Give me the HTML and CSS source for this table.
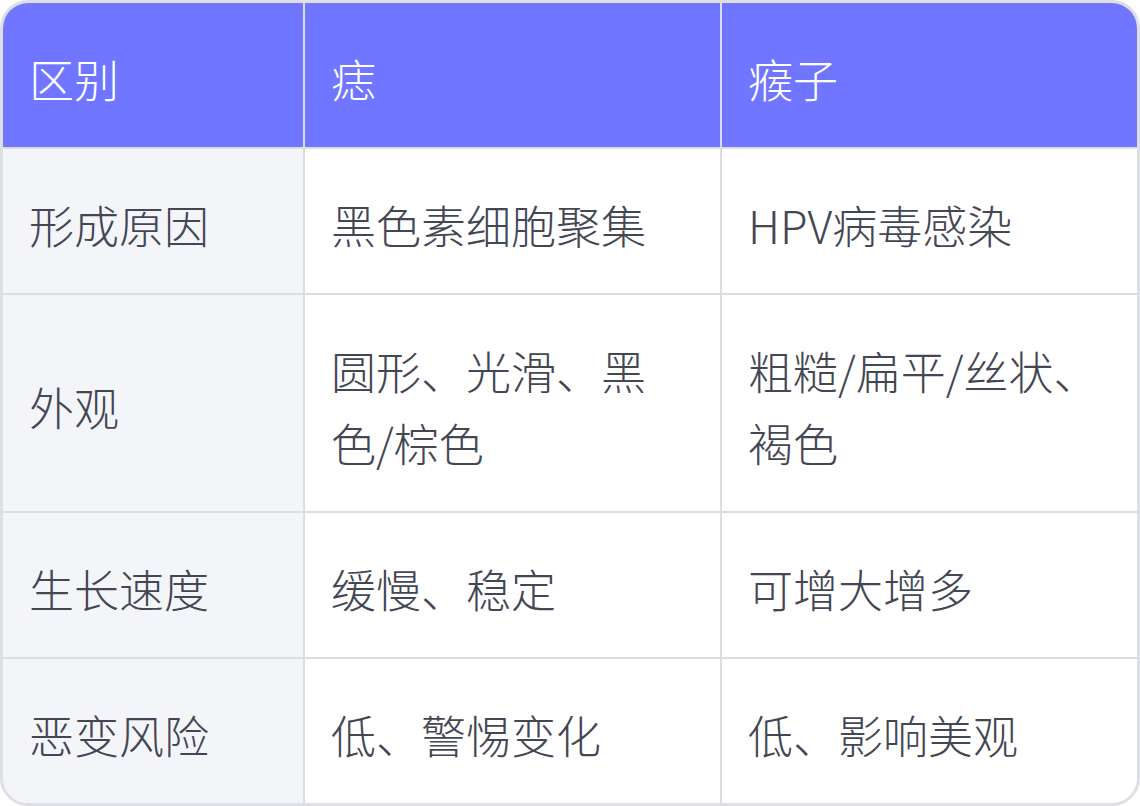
FILE: index.html
```html
<!DOCTYPE html>
<html lang="zh">
<head>
<meta charset="utf-8">
<link rel="stylesheet" href="styles.css">
</head>
<body>
<div class="card">
<table class="cmp">
<colgroup><col class="c1"><col class="c2"><col class="c3"></colgroup>
<thead>
<tr><th>区别</th><th>痣</th><th>瘊子</th></tr>
</thead>
<tbody>
<tr><td class="key">形成原因</td><td>黑色素细胞聚集</td><td>HPV病毒感染</td></tr>
<tr><td class="key">外观</td><td>圆形、光滑、黑色/棕色</td><td>粗糙/扁平/丝状、褐色</td></tr>
<tr><td class="key">生长速度</td><td>缓慢、稳定</td><td>可增大增多</td></tr>
<tr><td class="key">恶变风险</td><td>低、警惕变化</td><td>低、影响美观</td></tr>
</tbody>
</table>
</div>
</body>
</html>
```
FILE: styles.css
```css
html, body { margin: 0; padding: 0; background: #ffffff; }
.card {
  width: 1140px;
  height: 806px;
  box-sizing: border-box;
  border: 3px solid #dedfe4;
  border-radius: 28px;
  overflow: hidden;
  background: #ffffff;
}
.cmp {
  width: 100%;
  border-collapse: collapse;
  table-layout: fixed;
  font-family: "Noto Sans CJK SC", "Noto Sans", sans-serif;
  font-size: 45px;
  line-height: 72px;
  color: #434653;
}
.c1 { width: 301px; }
.c2 { width: 417px; }
.cmp th, .cmp td {
  text-align: left;
  vertical-align: middle;
  padding: 40px 28px 32px 26px;
  border: 2px solid #dcdde3;
  font-weight: 300;
}
.cmp tr > :first-child { border-left: none; }
.cmp tr > :last-child { border-right: none; }
.cmp thead th { border-top: none; background: #7076ff; color: #ffffff; }
.cmp tbody tr:last-child td { border-bottom: none; }
.cmp td.key { background: #f4f5f9; }
```
